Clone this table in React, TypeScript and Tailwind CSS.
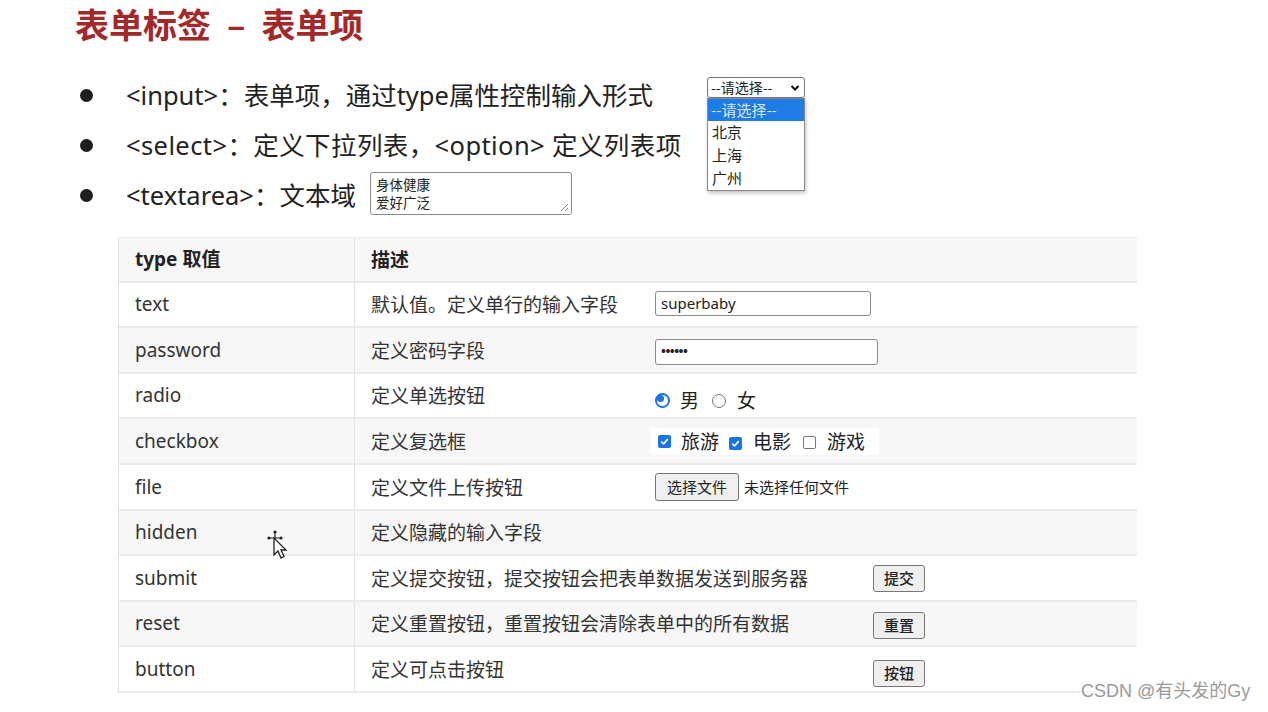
import React from "react";

const F = { fontFamily: '"Noto Sans", "Noto Sans CJK SC", sans-serif' };
const CJK = { fontFamily: '"Noto Sans CJK SC", sans-serif' };

function Radio({ checked }: { checked?: boolean }) {
  return checked ? (
    <span className="inline-block w-[15px] h-[15px] rounded-full border-[2px] border-[#1a73e8] bg-white flex items-center justify-center">
      <span className="block w-[7px] h-[7px] rounded-full bg-[#1a73e8]" />
    </span>
  ) : (
    <span className="inline-block w-[14px] h-[14px] rounded-full border border-[#767676] bg-white" />
  );
}

function Check({ checked }: { checked?: boolean }) {
  return checked ? (
    <span className="inline-flex w-[13px] h-[13px] rounded-[2px] bg-[#1a73e8] items-center justify-center">
      <svg width="11" height="11" viewBox="0 0 12 12">
        <path d="M2.5 6.2 L5 8.6 L9.6 3.4" fill="none" stroke="white" strokeWidth="1.8" />
      </svg>
    </span>
  ) : (
    <span className="inline-block w-[13px] h-[13px] rounded-[2px] border border-[#767676] bg-white" />
  );
}

function Btn({ children }: { children: React.ReactNode }) {
  return (
    <span
      className="inline-flex items-center justify-center w-[52px] h-[27px] rounded-[3px] border border-[#767676] bg-[#efefef] text-[15px] text-[#222] font-medium"
      style={CJK}
    >
      {children}
    </span>
  );
}

type Row = { t: string; d: string; h: string; gray: boolean; ctrl?: React.ReactNode; dw?: string };

export default function App() {
  const rows: Row[] = [
    {
      t: "text",
      d: "默认值。定义单行的输入字段",
      h: "h-[45px]",
      gray: false,
      ctrl: (
        <span className="flex items-center w-[216px] h-[25px] border border-[#8a8a8a] rounded-[3px] px-[5px] text-[15px] text-[#222] bg-white -mt-[2px]">
          superbaby
        </span>
      ),
    },
    {
      t: "password",
      d: "定义密码字段",
      h: "h-[46px]",
      gray: true,
      ctrl: (
        <span className="flex items-center w-[223px] h-[26px] border border-[#8a8a8a] rounded-[3px] px-[5px] text-[13px] font-bold tracking-[-0.5px] text-[#222] bg-white mt-[3px]">
          ••••••
        </span>
      ),
    },
    {
      t: "radio",
      d: "定义单选按钮",
      h: "h-[45px]",
      gray: false,
      ctrl: (
        <span className="flex items-center text-[19px] text-[#222] mt-[9px]" style={CJK}>
          <Radio checked />
          <span className="ml-[10px]">男</span>
          <span className="ml-[13px]"><Radio /></span>
          <span className="ml-[11px]">女</span>
        </span>
      ),
    },
    {
      t: "checkbox",
      d: "定义复选框",
      h: "h-[46px]",
      gray: true,
      ctrl: (
        <span className="flex items-center h-[27px] w-[228px] bg-white -ml-[4px] pl-[7px] text-[19px] text-[#222]" style={CJK}>
          <Check checked />
          <span className="ml-[10px]">旅游</span>
          <span className="ml-[10px]"><Check checked /></span>
          <span className="ml-[11px]">电影</span>
          <span className="ml-[12px]"><Check /></span>
          <span className="ml-[11px]">游戏</span>
        </span>
      ),
    },
    {
      t: "file",
      d: "定义文件上传按钮",
      h: "h-[46px]",
      gray: false,
      ctrl: (
        <span className="flex items-center" style={CJK}>
          <span className="inline-flex items-center justify-center w-[84px] h-[28px] rounded-[3px] border border-[#767676] bg-[#efefef] text-[15px] text-[#222]">
            选择文件
          </span>
          <span className="ml-[5px] text-[15px] text-[#222]">未选择任何文件</span>
        </span>
      ),
    },
    { t: "hidden", d: "定义隐藏的输入字段", h: "h-[45px]", gray: true },
    {
      t: "submit",
      d: "定义提交按钮，提交按钮会把表单数据发送到服务器",
      h: "h-[46px]",
      gray: false,
      dw: "w-[518px]",
      ctrl: <Btn>提交</Btn>,
    },
    {
      t: "reset",
      d: "定义重置按钮，重置按钮会清除表单中的所有数据",
      h: "h-[45px]",
      gray: true,
      dw: "w-[518px]",
      ctrl: <span className="mt-[4px] flex"><Btn>重置</Btn></span>,
    },
    {
      t: "button",
      d: "定义可点击按钮",
      h: "h-[46px]",
      gray: false,
      dw: "w-[518px]",
      ctrl: <span className="mt-[8px] flex"><Btn>按钮</Btn></span>,
    },
  ];

  return (
    <div className="relative w-[1268px] h-[712px] bg-white overflow-hidden text-[#222]" style={F}>
      <h1
        className="pl-[75px] pt-[2px] text-[34px] leading-[44px] font-bold text-[#a3282a] flex items-center"
        style={CJK}
      >
        <span>表单标签</span>
        <span className="mx-[16px]">–</span>
        <span>表单项</span>
      </h1>

      <ul className="mt-[24px] pl-[80px] flex flex-col text-[25.5px] text-[#222]">
        <li className="h-[50px] flex items-center">
          <span className="w-[13px] h-[13px] rounded-full bg-[#1e1e1e]" />
          <span className="ml-[33px]">&lt;input&gt;：表单项，通过type属性控制输入形式</span>
        </li>
        <li className="h-[50px] flex items-center">
          <span className="w-[13px] h-[13px] rounded-full bg-[#1e1e1e]" />
          <span className="ml-[33px] tracking-[0.4px]">&lt;select&gt;：定义下拉列表，&lt;option&gt; 定义列表项</span>
        </li>
        <li className="h-[50px] flex items-center">
          <span className="w-[13px] h-[13px] rounded-full bg-[#1e1e1e]" />
          <span className="ml-[33px]">&lt;textarea&gt;：文本域</span>
          <span
            className="relative ml-[14px] -mt-[4px] w-[202px] h-[43px] border border-[#8a8a8a] rounded-[3px] px-[5px] pt-[2px] text-[13.5px] leading-[18px] text-[#222] bg-white"
            style={CJK}
          >
            <span className="block">身体健康</span>
            <span className="block">爱好广泛</span>
            <svg className="absolute right-[2px] bottom-[2px]" width="10" height="10" viewBox="0 0 10 10">
              <path d="M9 2 L2 9 M9 6 L6 9" stroke="#888" strokeWidth="1" />
            </svg>
          </span>
        </li>
      </ul>

      {/* table */}
      <div className="mt-[17px] ml-[118px] w-[1019px] border-l border-[#e2e2e2] border-t border-t-[#ececec]">
        <div className="flex h-[45px] bg-[#f7f7f7] border-b-2 border-[#e8e8e8] font-bold text-[19px] text-[#222]">
          <div className="w-[236px] border-r border-[#e2e2e2] pl-[16px] flex items-center">type 取值</div>
          <div className="flex-1 pl-[16px] flex items-center" style={CJK}>描述</div>
        </div>
        {rows.map((r) => (
          <div
            key={r.t}
            className={`flex ${r.h} ${r.gray ? "bg-[#f7f7f7]" : "bg-white"} border-b-2 border-[#ebebeb] text-[19px] text-[#333]`}
          >
            <div className="w-[236px] border-r border-[#e2e2e2] pl-[16px] flex items-center">{r.t}</div>
            <div className="flex-1 flex items-center">
              <span className={`${r.dw ?? "w-[300px]"} pl-[16px] shrink-0`} style={CJK}>
                {r.d}
              </span>
              {r.ctrl}
            </div>
          </div>
        ))}
      </div>

      {/* open select dropdown overlay */}
      <div className="absolute left-[707px] top-[77px] w-[98px]" style={CJK}>
        <div className="h-[21px] border border-[#767676] rounded-[3px] bg-white flex items-center justify-between pl-[3px] pr-[4px] text-[14px] text-[#222]">
          <span>--请选择--</span>
          <svg width="10" height="8" viewBox="0 0 10 8">
            <path d="M1.5 2 L5 5.5 L8.5 2" fill="none" stroke="#111" strokeWidth="2" />
          </svg>
        </div>
        <div className="border border-[#8a8a8a] bg-white shadow-[1px_2px_4px_rgba(0,0,0,0.25)] text-[15px] text-[#222]">
          <div className="h-[22px] bg-[#1e7be8] text-[#dbe9ff] pl-[3px] flex items-center">--请选择--</div>
          <div className="h-[23px] pl-[4px] flex items-center">北京</div>
          <div className="h-[23px] pl-[4px] flex items-center">上海</div>
          <div className="h-[23px] pl-[4px] flex items-center">广州</div>
        </div>
      </div>

      {/* mouse cursor */}
      <svg className="absolute left-[264px] top-[529px]" width="26" height="32" viewBox="0 0 26 32">
        <circle cx="11" cy="3" r="1.6" fill="#222" />
        <circle cx="5" cy="9" r="1.6" fill="#222" />
        <circle cx="17" cy="9" r="1.6" fill="#222" />
        <path d="M11 4 V12 M6 9 H16" stroke="#222" strokeWidth="1.2" />
        <path d="M10 9 L10 26 L14 22 L17 29 L20 27.5 L17 21 L22 21 Z" fill="white" stroke="#222" strokeWidth="1.3" />
      </svg>

      {/* watermark */}
      <div
        className="absolute left-[1080px] top-[678px] text-[18px] text-[#9a9a9a] bg-white/70 px-[1px]"
        style={{ fontFamily: '"Liberation Sans", "Noto Sans CJK SC", sans-serif' }}
      >
        CSDN @有头发的Gy
      </div>
    </div>
  );
}
